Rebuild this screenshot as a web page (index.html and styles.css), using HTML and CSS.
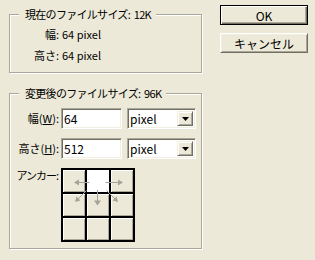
FILE: index.html
```html
<!DOCTYPE html>
<html lang="ja">
<head>
<meta charset="utf-8">
<link rel="stylesheet" href="styles.css">
</head>
<body>
<div class="dialog">
  <div class="left">
    <fieldset class="group g1">
      <legend>現在のファイルサイズ: 12K</legend>
      <div class="info">
        <span class="lbl">幅:</span><span class="val">64 pixel</span>
        <span class="lbl">高さ:</span><span class="val">64 pixel</span>
      </div>
    </fieldset>
    <fieldset class="group g2">
      <legend>変更後のファイルサイズ: 96K</legend>
      <div class="form">
        <span class="lbl">幅(<u>W</u>):</span>
        <div class="input">64</div>
        <div class="select"><span class="sel-text">pixel</span><span class="drop"><svg width="7" height="4" viewBox="0 0 7 4"><path d="M0 0h7L3.5 4z" fill="#000"/></svg></span></div>
        <span class="lbl">高さ(<u>H</u>):</span>
        <div class="input">512</div>
        <div class="select"><span class="sel-text">pixel</span><span class="drop"><svg width="7" height="4" viewBox="0 0 7 4"><path d="M0 0h7L3.5 4z" fill="#000"/></svg></span></div>
        <span class="lbl anchor-lbl">アンカー:</span>
        <div class="anchor">
          <div class="cell"></div><div class="cell sel"></div><div class="cell"></div>
          <div class="cell"></div><div class="cell"></div><div class="cell"></div>
          <div class="cell"></div><div class="cell"></div><div class="cell"></div>
          <svg class="arrows" width="74" height="74" viewBox="0 0 74 74">
            <g stroke="#a6a49a" stroke-width="1" fill="none">
              <path d="M17.5 14.5H28.5"/>
              <path d="M44.5 14.5H57.5"/>
              <path d="M36.5 22V33"/>
              <path d="M25.5 22.5L17 31"/>
              <path d="M45.5 22.5L54 31"/>
            </g>
            <g fill="#a6a49a">
              <path d="M13 14.5L18 11.5V17.5z"/>
              <path d="M62 14.5L57 11.5V17.5z"/>
              <path d="M36.5 37.5L33 32.5H40z"/>
              <path d="M14 34L15.5 28.5L19.5 32.5z"/>
              <path d="M57 34L55.5 28.5L51.5 32.5z"/>
            </g>
          </svg>
        </div>
      </div>
    </fieldset>
  </div>
  <div class="buttons">
    <div class="btn default">OK</div>
    <div class="btn">キャンセル</div>
  </div>
</div>
</body>
</html>
```
FILE: styles.css
```css
html, body {
  margin: 0;
  background: #ece9d8;
}
body {
  font: 11px/15px "Noto Sans CJK JP", "Noto Sans", sans-serif;
  color: #000;
  width: 315px;
  height: 260px;
  overflow: hidden;
}
.dialog {
  display: flex;
  align-items: flex-start;
  padding: 5px 0 0 9px;
}
.left {
  width: 194px;
  padding-top: 2px;
  display: flex;
  flex-direction: column;
  gap: 13px;
}
.group {
  margin: 0;
  min-width: 0;
  border: 1px solid #aca899;
  box-shadow: inset 1px 1px 0 #fff, 1px 1px 0 #fff;
  width: 193px;
  box-sizing: border-box;
}
.group legend {
  margin-left: 9px;
  padding: 0 5px 0 6px;
  line-height: 15px;
  background: #ece9d8;
  letter-spacing: -0.7px;
  word-spacing: 2px;
}
.g1 {
  padding: 5px 0 9px;
}
.info {
  display: grid;
  grid-template-columns: 49px auto;
  column-gap: 3px;
  row-gap: 6px;
}
.lbl {
  text-align: right;
  white-space: nowrap;
}
.g2 {
  padding: 7px 0 6px;
}
.form {
  display: grid;
  grid-template-columns: 49px 61px 69px;
  grid-template-rows: 21px 21px 74px;
  column-gap: 2px;
  row-gap: 9px;
  align-items: center;
}
.input, .select {
  height: 21px;
  box-sizing: border-box;
  background: #fff;
  border: 1px solid;
  border-color: #aca899 #fff #fff #aca899;
  box-shadow: inset 1px 1px 0 #716f64, inset -1px -1px 0 #f1efe2;
  padding: 2px 0 0 2px;
  line-height: 15px;
  font-size: 12px;
}
.select {
  margin-left: 3px;
  width: 69px;
  display: flex;
  padding: 2px;
  align-items: stretch;
}
.sel-text {
  flex: 1;
  line-height: 15px;
}
.drop {
  width: 16px;
  box-sizing: border-box;
  background: #ece9d8;
  border: 1px solid;
  border-color: #f1efe2 #716f64 #716f64 #f1efe2;
  box-shadow: inset 1px 1px 0 #fff, inset -1px -1px 0 #aca899;
  display: flex;
  align-items: center;
  justify-content: center;
}
.anchor-lbl {
  align-self: start;
  letter-spacing: -1px;
  padding-right: 1px;
}
.anchor {
  grid-column: 2 / 4;
  position: relative;
  width: 74px;
  height: 74px;
  box-sizing: border-box;
  background: #000;
  padding: 2px;
  display: grid;
  grid-template-columns: repeat(3, 22px);
  grid-template-rows: repeat(3, 22px);
  gap: 2px;
}
.cell {
  background: #ece9d8;
  box-shadow: inset 1px 1px 0 #fff, inset -1px -1px 0 #aca899;
}
.cell.sel {
  background: #fff;
  box-shadow: none;
}
.arrows {
  position: absolute;
  left: 0;
  top: 0;
}
.buttons {
  margin-left: 17px;
  display: flex;
  flex-direction: column;
  gap: 8px;
}
.btn {
  width: 88px;
  height: 20px;
  box-sizing: border-box;
  display: flex;
  align-items: center;
  justify-content: center;
  border: 1px solid;
  border-color: #fff #716f64 #716f64 #fff;
  box-shadow: inset 1px 1px 0 #f1efe2, inset -1px -1px 0 #aca899;
  line-height: 15px;
  font-size: 12px;
}
.btn.default {
  border-color: #000;
  box-shadow: inset 1px 1px 0 #fff, inset -1px -1px 0 #716f64, inset -2px -2px 0 #aca899;
}
```
